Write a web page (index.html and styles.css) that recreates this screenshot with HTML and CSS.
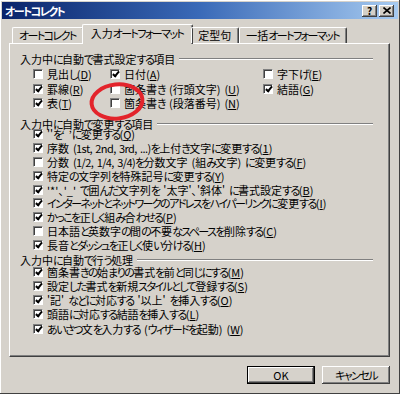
FILE: index.html
```html
<!DOCTYPE html>
<html lang="ja">
<head>
    <meta charset="UTF-8">
    <title>オートコレクト</title>
    <link rel="stylesheet" href="styles.css">
</head>
<body>
<div class="window">
    <div class="titlebar">
        <span class="title"><span class="k">オートコレクト</span></span>
        <span class="tbtn help">?</span>
        <span class="tbtn close">
            <svg width="8" height="7" viewBox="0 0 8 7"><path d="M0.5 0.5 L7.5 6.5 M7.5 0.5 L0.5 6.5" stroke="#000" stroke-width="1.6"/></svg>
        </span>
    </div>

    <div class="tabs">
        <div class="tab"><span class="k">オートコレクト</span></div>
        <div class="tab active">入力<span class="k">オートフォーマット</span></div>
        <div class="tab">定型句</div>
        <div class="tab">一括<span class="k">オートフォーマット</span></div>
    </div>

    <div class="panel">
        <div class="group-label"><span>入力中<span class="k">に</span>自動<span class="k">で</span>書式設定<span class="k">する</span>項目</span></div>
        <div class="grid3">
            <div class="opt"><span class="cb"></span>見出<span class="k">し</span>(<u>D</u>)</div>
            <div class="opt"><span class="cb on"></span>日付(<u>A</u>)</div>
            <div class="opt"><span class="cb"></span>字下<span class="k">げ</span>(<u>E</u>)</div>
            <div class="opt"><span class="cb on"></span>罫線(<u>R</u>)</div>
            <div class="opt"><span class="cb"></span>箇条書<span class="k">き</span> (行頭文字) (<u>U</u>)</div>
            <div class="opt"><span class="cb on"></span>結語(<u>G</u>)</div>
            <div class="opt"><span class="cb on"></span>表(<u>T</u>)</div>
            <div class="opt"><span class="cb"></span>箇条書<span class="k">き</span> (段落番号) (<u>N</u>)</div>
            <div class="opt"></div>
        </div>

        <div class="group-label g2"><span>入力中<span class="k">に</span>自動<span class="k">で</span>変更<span class="k">する</span>項目</span></div>
        <div class="list">
            <div class="opt"><span class="cb on"></span>''<span class="k">を</span>‘ ’<span class="k">に</span>変更<span class="k">する</span>(<u>Q</u>)</div>
            <div class="opt"><span class="cb on"></span>序数 <span class="l">(1st, 2nd, 3rd, ...)</span> <span class="k">を</span>上付<span class="k">き</span>文字<span class="k">に</span>変更<span class="k">する</span>(<u>1</u>)</div>
            <div class="opt"><span class="cb"></span>分数 <span class="l">(1/2, 1/4, 3/4)</span> <span class="k">を</span>分数文字 (組<span class="k">み</span>文字) <span class="k">に</span>変更<span class="k">する</span>(<u>F</u>)</div>
            <div class="opt"><span class="cb on"></span>特定<span class="k">の</span>文字列<span class="k">を</span>特殊記号<span class="k">に</span>変更<span class="k">する</span>(<u>Y</u>)</div>
            <div class="opt"><span class="cb on"></span>'*'、'_' <span class="k">で</span>囲<span class="k">んだ</span>文字列<span class="k">を</span> '太字'、'斜体' <span class="k">に</span>書式設定<span class="k">する</span>(<u>B</u>)</div>
            <div class="opt"><span class="cb on"></span><span class="k">インターネットとネットワークのアドレスをハイパーリンクに</span>変更<span class="k">する</span>(<u>I</u>)</div>
            <div class="opt"><span class="cb on"></span><span class="k">かっこを</span>正<span class="k">しく</span>組<span class="k">み</span>合<span class="k">わせる</span>(<u>P</u>)</div>
            <div class="opt"><span class="cb"></span>日本語<span class="k">と</span>英数字<span class="k">の</span>間<span class="k">の</span>不要<span class="k">なスペースを</span>削除<span class="k">する</span>(<u>C</u>)</div>
            <div class="opt"><span class="cb on"></span>長音<span class="k">とダッシュを</span>正<span class="k">しく</span>使<span class="k">い</span>分<span class="k">ける</span>(<u>H</u>)</div>
        </div>

        <div class="group-label g3"><span>入力中<span class="k">に</span>自動<span class="k">で</span>行<span class="k">う</span>処理</span></div>
        <div class="list l3">
            <div class="opt"><span class="cb on"></span>箇条書<span class="k">きの</span>始<span class="k">まりの</span>書式<span class="k">を</span>前<span class="k">と</span>同<span class="k">じにする</span>(<u>M</u>)</div>
            <div class="opt"><span class="cb on"></span>設定<span class="k">した</span>書式<span class="k">を</span>新規<span class="k">スタイルとして</span>登録<span class="k">する</span>(<u>S</u>)</div>
            <div class="opt"><span class="cb on"></span>'記' <span class="k">などに</span>対応<span class="k">する</span> '以上' <span class="k">を</span>挿入<span class="k">する</span>(<u>O</u>)</div>
            <div class="opt"><span class="cb on"></span>頭語<span class="k">に</span>対応<span class="k">する</span>結語<span class="k">を</span>挿入<span class="k">する</span>(<u>L</u>)</div>
            <div class="opt"><span class="cb on"></span><span class="k">あいさつ</span>文<span class="k">を</span>入力<span class="k">する</span> (<span class="k">ウィザードを</span>起動) (<u>W</u>)</div>
        </div>
    </div>

    <div class="buttons">
        <div class="btn default">OK</div>
        <div class="btn"><span class="k">キャンセル</span></div>
    </div>

    <!-- red hand-drawn circle on top of the screenshot -->
    <svg class="mark" width="400" height="394" viewBox="0 0 400 394">
        <ellipse cx="117" cy="101.5" rx="25.5" ry="17" transform="rotate(-6 117 101.5)" fill="none" stroke="#e3242b" stroke-width="4"/>
    </svg>
</div>
</body>
</html>
```

FILE: styles.css
```css
body {
    margin: 0;
    background-color: #d4d0c8;
    font-family: "Noto Sans CJK JP", "Noto Sans", sans-serif;
    font-size: 11px;
    font-feature-settings: "palt";
    color: #000;
}
.k {
    letter-spacing: -1.6px;
}
.l {
    letter-spacing: -0.6px;
}
.window {
    position: relative;
    width: 400px;
    height: 394px;
    box-sizing: border-box;
    padding: 2px;
    background-color: #d6d2cb;
    box-shadow: inset -1px -1px #404040, inset 1px 1px #fff;
}
.titlebar {
    height: 17px;
    display: flex;
    align-items: center;
    padding: 0 4px 0 3px;
    background: linear-gradient(to right, #0a246a, #3a6ab8 50%, #a6caf0);
}
.title {
    flex: 1;
    color: #fff;
    font-weight: bold;
    font-size: 11px;
}
.tbtn {
    width: 15px;
    height: 12px;
    box-sizing: border-box;
    background-color: #d4d0c8;
    box-shadow: inset -1px -1px #404040, inset 1px 1px #fff, inset -2px -2px #808080;
    display: flex;
    align-items: center;
    justify-content: center;
    font-size: 10px;
    font-weight: bold;
    line-height: 1;
}
.close {
    margin-left: 2px;
}
.tabs {
    display: flex;
    align-items: flex-end;
    height: 18px;
    margin-top: 6px;
    padding-left: 10px;
    position: relative;
    z-index: 1;
}
.tab {
    height: 15px;
    line-height: 15px;
    padding: 0 7px 0 6px;
    border: 1px solid #fff;
    border-right-color: #404040;
    border-bottom: none;
    border-radius: 2px 2px 0 0;
    box-shadow: inset -1px 0 #808080;
    white-space: nowrap;
}
.tab.active {
    height: 19px;
    line-height: 17px;
    margin: 0 -2px -1px;
    padding: 0 9px 0 8px;
    background-color: #d6d2cb;
}
.panel {
    margin-left: 7px;
    width: 381px;
    height: 314px;
    box-sizing: border-box;
    border: 1px solid #fff;
    border-right-color: #404040;
    border-bottom-color: #404040;
    box-shadow: inset -1px -1px #808080;
    padding: 9px 16px 0 10px;
}
.group-label {
    display: flex;
    align-items: center;
    height: 12px;
    line-height: 12px;
    white-space: nowrap;
}
.group-label::after {
    content: "";
    flex: 1;
    margin-left: 4px;
    border-top: 1px solid #808080;
    border-bottom: 1px solid #fff;
}
.g2 {
    margin-top: 7px;
}
.g3 {
    margin-top: 2px;
}
.grid3 {
    display: grid;
    grid-template-columns: 77px 153px auto;
    grid-auto-rows: 14.5px;
    margin: 2px 0 0 13px;
}
.list {
    display: grid;
    grid-auto-rows: 13.8px;
    margin: -2px 0 0 13px;
}
.l3 {
    grid-auto-rows: 14.2px;
    margin-top: -1px;
}
.opt {
    display: flex;
    align-items: center;
    white-space: pre;
    word-spacing: 1.5px;
    line-height: 12px;
}
.opt u {
    text-underline-offset: 1px;
}
.cb {
    position: relative;
    flex: none;
    width: 10px;
    height: 10px;
    box-sizing: border-box;
    margin-right: 4px;
    background-color: #fff;
    border: 1px solid;
    border-color: #808080 #fff #fff #808080;
    box-shadow: inset 1px 1px #404040;
}
.cb.on::after {
    content: "";
    position: absolute;
    left: 2.5px;
    top: 0px;
    width: 2px;
    height: 5px;
    border: solid #000;
    border-width: 0 2px 2px 0;
    transform: rotate(40deg);
}
.buttons {
    display: flex;
    justify-content: flex-end;
    gap: 7px;
    margin-top: 9px;
    padding-right: 8px;
}
.btn {
    width: 68px;
    height: 18px;
    box-sizing: border-box;
    line-height: 18px;
    text-align: center;
    background-color: #d6d2cb;
    box-shadow: inset -1px -1px #404040, inset 1px 1px #fff, inset -2px -2px #808080;
}
.btn.default {
    border: 1px solid #000;
    line-height: 16px;
}
.mark {
    position: absolute;
    left: 0;
    top: 0;
    pointer-events: none;
}
```
